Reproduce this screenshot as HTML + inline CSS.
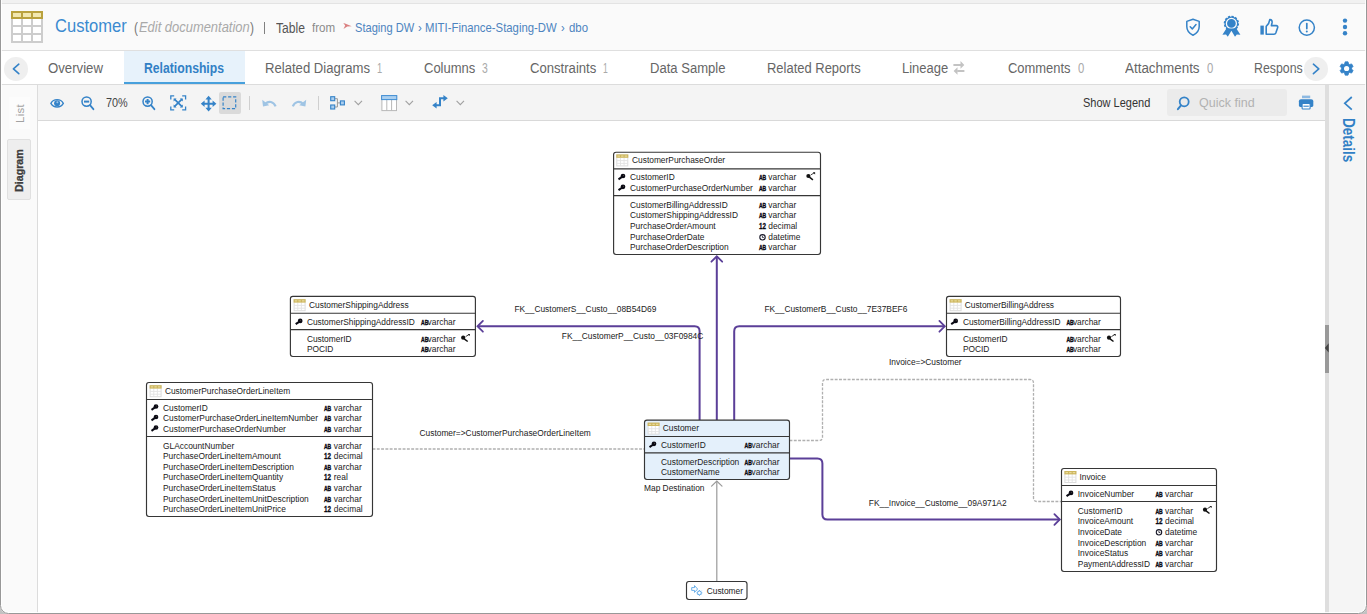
<!DOCTYPE html>
<html lang="en">
<head>
<meta charset="utf-8">
<title>Customer - Relationships</title>
<style>
html,body{margin:0;padding:0;}
body{width:1367px;height:614px;overflow:hidden;position:relative;background:#fff;font-family:"Liberation Sans",Arial,sans-serif;}
.abs{position:absolute;}
.t{position:absolute;white-space:nowrap;line-height:1em;transform-origin:0 50%;display:inline-block;}
#topstrip{left:0;top:0;width:1367px;height:3px;background:#f1f1f1;}
#topline{left:0;top:3px;width:1367px;height:1px;background:#e3e3e3;}
#header{left:0;top:4px;width:1367px;height:46px;background:#fafafa;border-bottom:1px solid #dfdfdf;}
#tabs{left:0;top:51px;width:1367px;height:33px;background:#fff;border-bottom:1px solid #dcdcdc;}
#tabactive{left:124px;top:51px;width:120.5px;height:33px;background:#e7f2fb;border-bottom:2.2px solid #47a0dc;box-sizing:border-box;}
#toolbar{left:38px;top:85px;width:1287px;height:35px;background:#f4f4f4;border-bottom:1px solid #d9d9d9;}
#leftbar{left:0;top:85px;width:37px;height:529px;background:#fafafa;border-right:1px solid #dcdcdc;}
#canvas{left:38px;top:121px;width:1287px;height:493px;background:#fff;}
#splitter{left:1325px;top:85px;width:3.8px;height:529px;background:#dedede;}
#handle{left:1325px;top:325px;width:3.8px;height:48px;background:#999;}
#details{left:1328.6px;top:85px;width:38.4px;height:529px;background:#f5f5f5;}
#frame{left:0;top:-4px;width:1367px;height:618px;border:1.3px solid #989898;border-radius:0 0 8.5px 8.5px;pointer-events:none;box-sizing:border-box;box-shadow:inset 0 0 0 1px rgba(255,255,255,0.85),0 0 0 6px #c2c2c2;}
.circ{width:23.5px;height:23.5px;border-radius:50%;background:#efefef;}
#qf{left:1167px;top:89px;width:120px;height:27px;background:#ebebeb;border-radius:3px;}
#selbox{left:219px;top:92px;width:22px;height:22px;background:#dadada;border-radius:2px;}
.sep{width:1px;height:14px;top:96px;background:#cfcfcf;}
#diagtab{left:7px;top:139px;width:23.5px;height:60.5px;background:#eeeeee;border:1px solid #e0e0e0;box-sizing:border-box;border-radius:2px;}
.vt{position:absolute;white-space:nowrap;line-height:1em;transform-origin:0 0;}
svg{overflow:visible}
</style>
</head>
<body>
<div id="topstrip" class="abs"></div><div id="topline" class="abs"></div>
<div id="header" class="abs"></div>
<div id="tabs" class="abs"></div>
<div id="tabactive" class="abs"></div>
<div id="toolbar" class="abs"></div>
<div id="leftbar" class="abs"></div>
<div id="canvas" class="abs"></div>
<div id="splitter" class="abs"></div>
<div id="handle" class="abs"></div>
<div id="details" class="abs"></div>
<div class="abs circ" style="left:4.3px;top:57px"></div>
<div class="abs circ" style="left:1304.2px;top:57px"></div>
<div id="qf" class="abs"></div>
<div id="selbox" class="abs"></div>
<div class="abs sep" style="left:249px"></div>
<div class="abs sep" style="left:318px"></div>
<div id="diagtab" class="abs"></div>
<div class="abs" style="left:264px;top:22px;width:1px;height:11.5px;background:#808080"></div>
<svg class="abs" style="left:11px;top:11px" width="32" height="32" viewBox="0 0 32 32"><rect x="0" y="0" width="32" height="32" fill="#cdcdcd"/><rect x="2" y="8" width="8" height="6" fill="#fff"/><rect x="12" y="8" width="8" height="6" fill="#fff"/><rect x="22" y="8" width="8" height="6" fill="#fff"/><rect x="2" y="16" width="8" height="6" fill="#fff"/><rect x="12" y="16" width="8" height="6" fill="#fff"/><rect x="22" y="16" width="8" height="6" fill="#fff"/><rect x="2" y="24" width="8" height="6" fill="#fff"/><rect x="12" y="24" width="8" height="6" fill="#fff"/><rect x="22" y="24" width="8" height="6" fill="#fff"/><rect x="0" y="0" width="32" height="8" fill="#b9a13d"/><rect x="2" y="2" width="8" height="4" fill="#f2e7ae"/><rect x="12" y="2" width="8" height="4" fill="#f2e7ae"/><rect x="22" y="2" width="8" height="4" fill="#f2e7ae"/></svg>
<svg class="abs" style="left:10px;top:61px" width="12" height="16" viewBox="0 0 12 16"><path d="M8.8 3.2L3.4 7.9L8.8 12.6" fill="none" stroke="#3583c8" stroke-width="1.6" stroke-linecap="round" stroke-linejoin="round"/></svg>
<svg class="abs" style="left:1310px;top:61px" width="12" height="16" viewBox="0 0 12 16"><path d="M3.4 3.2L8.8 7.9L3.4 12.6" fill="none" stroke="#3583c8" stroke-width="1.6" stroke-linecap="round" stroke-linejoin="round"/></svg>
<svg class="abs" style="left:343px;top:22px" width="10" height="8" viewBox="0 0 10 8"><path d="M0.3 1L2 1.4L8.7 4.2L4.2 4.5L0.5 6.9L2.2 3.5Z" fill="#d4686a" opacity="0.85"/></svg>
<svg class="abs" style="left:1185px;top:17.6px" width="16" height="18.4" viewBox="0 0 16 18.4"><path d="M8 1.2L14.2 3.4V8.6C14.2 12.6 11.6 15.6 8 17.2C4.4 15.6 1.8 12.6 1.8 8.6V3.4Z" fill="none" stroke="#3583c8" stroke-width="1.5" stroke-linejoin="round"/><path d="M5.2 8.8L7.3 10.9L11 6.6" fill="none" stroke="#3583c8" stroke-width="1.5" stroke-linecap="round" stroke-linejoin="round"/></svg>
<svg class="abs" style="left:1222px;top:16.4px" width="19" height="21" viewBox="0 0 19 21"><circle cx="9.4" cy="7.4" r="6.9" fill="#3583c8" stroke="#3583c8" stroke-width="1.6" stroke-dasharray="2.2 1.4"/><circle cx="9.4" cy="7.4" r="5" fill="none" stroke="#fafafa" stroke-width="1.3"/><path d="M4.4 12.4L0.4 18.8L4 18.4L5.8 20.8L9.4 14.8L13 20.8L14.8 18.4L18.4 18.8L14.4 12.4Z" fill="#3583c8"/></svg>
<svg class="abs" style="left:1259.5px;top:17.6px" width="19" height="18" viewBox="0 0 19 18"><rect x="0.4" y="7.6" width="3.4" height="9" fill="#3583c8"/><path d="M6.2 8.4C8.2 6.8 9.4 4.6 9.8 1.6C11.6 1.4 12.4 3 12 5L11.4 7.6H16.2C17.4 7.6 18 8.6 17.6 9.8L15.8 15C15.5 15.8 14.9 16.2 14 16.2H6.2Z" fill="none" stroke="#3583c8" stroke-width="1.6" stroke-linejoin="round"/></svg>
<svg class="abs" style="left:1298px;top:18.8px" width="18" height="18" viewBox="0 0 18 18"><circle cx="8.8" cy="8.6" r="7.6" fill="none" stroke="#3583c8" stroke-width="1.5"/><path d="M8.8 4.6V9.6" stroke="#3583c8" stroke-width="1.7" stroke-linecap="round"/><circle cx="8.8" cy="12.4" r="1" fill="#3583c8"/></svg>
<svg class="abs" style="left:1341px;top:17px" width="8" height="20" viewBox="0 0 8 20"><circle cx="4" cy="3.6" r="2.2" fill="#3583c8"/><circle cx="4" cy="10" r="2.2" fill="#3583c8"/><circle cx="4" cy="16.3" r="2.2" fill="#3583c8"/></svg>
<svg class="abs" style="left:952.5px;top:61px" width="12" height="14" viewBox="0 0 12 14"><path d="M0.4 3.9H8M4.2 10H11.4" fill="none" stroke="#c3c3c3" stroke-width="2"/><path d="M7.5 0.1L11.3 3.9L7.5 7.7ZM4.5 6.2L0.6 10L4.5 13.8Z" fill="#c3c3c3"/></svg>
<svg class="abs" style="left:1340.4px;top:61.7px" width="14" height="14" viewBox="0 0 14 14"><path d="M8.02 13.15 L5.18 13.15 L4.56 11.07 L3.67 10.55 L1.55 11.05 L0.13 8.60 L1.63 7.02 L1.63 5.98 L0.13 4.40 L1.55 1.95 L3.67 2.45 L4.56 1.93 L5.18 -0.15 L8.02 -0.15 L8.64 1.93 L9.53 2.45 L11.65 1.95 L13.07 4.40 L11.57 5.98 L11.57 7.02 L13.07 8.60 L11.65 11.05 L9.53 10.55 L8.64 11.07Z" fill="#3583c8" stroke="#3583c8" stroke-width="0.8" stroke-linejoin="round"/><circle cx="6.6" cy="6.5" r="2.6" fill="#fff"/></svg>
<svg class="abs" style="left:50px;top:97.6px" width="15" height="11" viewBox="0 0 15 11"><path d="M0.9 5.3C3.6 0.4 10.6 0.4 13.3 5.3C10.6 10.2 3.6 10.2 0.9 5.3Z" fill="none" stroke="#3583c8" stroke-width="1.4"/><circle cx="7.1" cy="5.2" r="3" fill="#3583c8"/><circle cx="7.4" cy="4.2" r="1" fill="#9cc4e8"/></svg>
<svg class="abs" style="left:81px;top:96px" width="14" height="15" viewBox="0 0 14 15"><circle cx="5.6" cy="5.6" r="4.6" fill="none" stroke="#3583c8" stroke-width="1.5"/><path d="M9 9.2L12.4 13.2" stroke="#3583c8" stroke-width="1.8" stroke-linecap="round"/><path d="M3 5.6H8.2" stroke="#3583c8" stroke-width="2"/></svg>
<svg class="abs" style="left:141.8px;top:96px" width="14" height="15" viewBox="0 0 14 15"><circle cx="5.6" cy="5.6" r="4.6" fill="none" stroke="#3583c8" stroke-width="1.5"/><path d="M9 9.2L12.4 13.2" stroke="#3583c8" stroke-width="1.8" stroke-linecap="round"/><path d="M3 5.6H8.2M5.6 3V8.2" stroke="#3583c8" stroke-width="2"/></svg>
<svg class="abs" style="left:170px;top:95px" width="17" height="16" viewBox="0 0 17 16"><path d="M0.8 4.4V0.9H4.2M12.2 0.9H15.6V4.4M15.6 11.4V14.9H12.2M4.2 14.9H0.8V11.4" fill="none" stroke="#3583c8" stroke-width="1.3"/><path d="M4.4 4.2L12 11.6M12 4.2L4.4 11.6" stroke="#3583c8" stroke-width="1.7"/><path d="M3.6 3.4H6.6L3.6 6.4ZM12.8 3.4H9.8L12.8 6.4ZM3.6 12.4H6.6L3.6 9.4ZM12.8 12.4H9.8L12.8 9.4Z" fill="#3583c8"/></svg>
<svg class="abs" style="left:200.6px;top:95.6px" width="16" height="16" viewBox="0 0 16 16"><path d="M7.6 2V13.4M1.8 7.7H13.4" stroke="#3583c8" stroke-width="2"/><path d="M7.6 -0.2L10.8 3.6H4.4ZM7.6 15.6L10.8 11.8H4.4ZM-0.2 7.7L3.6 4.5V10.9ZM15.4 7.7L11.6 4.5V10.9Z" fill="#3583c8"/></svg>
<svg class="abs" style="left:222px;top:96px" width="15" height="14" viewBox="0 0 15 14"><rect x="1.1" y="0.9" width="12.6" height="11.8" fill="none" stroke="#3583c8" stroke-width="1.2" stroke-dasharray="3.2 1.8"/></svg>
<svg class="abs" style="left:261.5px;top:99px" width="15" height="9" viewBox="0 0 15 9"><path d="M3.4 4.8C6.6 1.6 11.6 2.4 13.6 7.4" fill="none" stroke="#9fc4e4" stroke-width="2.2"/><path d="M0.2 0.8L1 7.6L7.2 6.2Z" fill="#9fc4e4"/></svg>
<svg class="abs" style="left:291.5px;top:99px" width="15" height="9" viewBox="0 0 15 9"><path d="M11 4.8C7.8 1.6 2.8 2.4 0.8 7.4" fill="none" stroke="#9fc4e4" stroke-width="2.2"/><path d="M14.2 0.8L13.4 7.6L7.2 6.2Z" fill="#9fc4e4"/></svg>
<svg class="abs" style="left:330px;top:95.6px" width="16" height="15" viewBox="0 0 16 15"><path d="M5 2.7H7.4V11H5M7.4 6.9H10.4" fill="none" stroke="#9a9a9a" stroke-width="1"/><rect x="0.7" y="0.7" width="4" height="4" fill="#a9cdee" stroke="#3583c8" stroke-width="1.1"/><rect x="0.7" y="9" width="4" height="4" fill="#a9cdee" stroke="#3583c8" stroke-width="1.1"/><rect x="10.4" y="4.9" width="4" height="4" fill="#a9cdee" stroke="#3583c8" stroke-width="1.1"/></svg>
<svg class="abs" style="left:354px;top:100.4px" width="9" height="6" viewBox="0 0 9 6"><path d="M0.6 0.8L4.3 4.6L8 0.8" fill="none" stroke="#a0a0a0" stroke-width="1.1"/></svg>
<svg class="abs" style="left:404.6px;top:100.4px" width="9" height="6" viewBox="0 0 9 6"><path d="M0.6 0.8L4.3 4.6L8 0.8" fill="none" stroke="#a0a0a0" stroke-width="1.1"/></svg>
<svg class="abs" style="left:456px;top:100.4px" width="9" height="6" viewBox="0 0 9 6"><path d="M0.6 0.8L4.3 4.6L8 0.8" fill="none" stroke="#a0a0a0" stroke-width="1.1"/></svg>
<svg class="abs" style="left:380.8px;top:94.6px" width="17" height="17" viewBox="0 0 17 17"><rect x="0.9" y="0.8" width="14.6" height="14.8" fill="#fff" stroke="#b8b8b8" stroke-width="1"/><path d="M5.8 4V15.6M10.6 4V15.6" stroke="#b8b8b8" stroke-width="1"/><rect x="0.6" y="0.6" width="15.2" height="4" fill="#abd0f0" stroke="#3f8dd4" stroke-width="1"/></svg>
<svg class="abs" style="left:432px;top:95.2px" width="17" height="14" viewBox="0 0 17 14"><path d="M3.4 10.2H8V3.2H12.4" fill="none" stroke="#3583c8" stroke-width="2"/><path d="M0.2 10.2L4.6 7V13.4ZM15.8 3.2L11.4 0V6.4Z" fill="#3583c8"/></svg>
<svg class="abs" style="left:1176.4px;top:95.6px" width="14" height="15" viewBox="0 0 14 15"><circle cx="8.2" cy="5.8" r="4.5" fill="none" stroke="#3583c8" stroke-width="1.8"/><path d="M5 9.4L1.9 13.2" stroke="#3583c8" stroke-width="2" stroke-linecap="round"/></svg>
<svg class="abs" style="left:1299px;top:94.6px" width="15" height="15" viewBox="0 0 15 15"><rect x="3" y="0.6" width="8.2" height="2.6" fill="#8db9e2"/><path d="M2 4.2H12.2C13.4 4.2 14.3 5.1 14.3 6.3V10.6C14.3 11.4 13.7 12 12.9 12H1.3C0.5 12 -0.1 11.4 -0.1 10.6V6.3C-0.1 5.1 0.8 4.2 2 4.2Z" fill="#3583c8"/><rect x="3.1" y="8.4" width="8" height="5.6" rx="0.8" fill="#fff" stroke="#3583c8" stroke-width="1.1"/><path d="M4.4 11.2H9.8" stroke="#3583c8" stroke-width="1.1"/></svg>
<svg class="abs" style="left:1343px;top:95.6px" width="12" height="15" viewBox="0 0 12 15"><path d="M8.8 1L1.8 7.3L8.8 13.6" fill="none" stroke="#3583c8" stroke-width="1.7" stroke-linejoin="miter"/></svg>
<svg class="abs" style="left:1324.2px;top:343.4px" width="6" height="10" viewBox="0 0 6 10"><path d="M4.7 0.2V9.6L0.8 4.9Z" fill="#454545"/></svg>
<span class="t" style="left:55.3px;top:17.02px;font-size:18.4px;color:#3b8ad0;transform:scaleX(0.8994)">Customer</span>
<span class="t" style="left:134.2px;top:19.90px;font-size:15px;color:#777;transform:scaleX(0.8000)">(</span>
<span class="t" style="left:138.6px;top:20.24px;font-size:14.6px;color:#a9a9a9;transform:scaleX(0.8859);font-style:italic">Edit documentation</span>
<span class="t" style="left:250px;top:19.90px;font-size:15px;color:#777;transform:scaleX(0.8000)">)</span>
<span class="t" style="left:275.5px;top:20.75px;font-size:14px;color:#555;transform:scaleX(0.8665)">Table</span>
<span class="t" style="left:311.8px;top:22.10px;font-size:12.4px;color:#8a8a8a;transform:scaleX(0.9356)">from</span>
<span class="t" style="left:354.5px;top:22.10px;font-size:12.4px;color:#4d84bf;transform:scaleX(0.8968)">Staging DW</span>
<span class="t" style="left:417.6px;top:21.70px;font-size:12.4px;color:#4d84bf;transform:scaleX(0.9177)">›</span>
<span class="t" style="left:425.3px;top:22.10px;font-size:12.4px;color:#4d84bf;transform:scaleX(0.9152)">MITI-Finance-Staging-DW</span>
<span class="t" style="left:560.9px;top:21.70px;font-size:12.4px;color:#4d84bf;transform:scaleX(0.8936)">›</span>
<span class="t" style="left:568.5px;top:22.10px;font-size:12.4px;color:#4d84bf;transform:scaleX(0.9184)">dbo</span>
<span class="t" style="left:48.3px;top:60.75px;font-size:14px;color:#666;transform:scaleX(0.9424)">Overview</span>
<span class="t" style="left:144.3px;top:60.75px;font-size:14px;color:#3180c5;transform:scaleX(0.8715);font-weight:bold">Relationships</span>
<span class="t" style="left:265px;top:60.75px;font-size:14px;color:#666;transform:scaleX(0.9370)">Related Diagrams</span>
<span class="t" style="left:377.2px;top:60.75px;font-size:14px;color:#aaa;transform:scaleX(0.6669)">1</span>
<span class="t" style="left:424px;top:60.75px;font-size:14px;color:#666;transform:scaleX(0.9285)">Columns</span>
<span class="t" style="left:482px;top:60.75px;font-size:14px;color:#aaa;transform:scaleX(0.7439)">3</span>
<span class="t" style="left:529.5px;top:60.75px;font-size:14px;color:#666;transform:scaleX(0.9363)">Constraints</span>
<span class="t" style="left:602.7px;top:60.75px;font-size:14px;color:#aaa;transform:scaleX(0.6156)">1</span>
<span class="t" style="left:650.3px;top:60.75px;font-size:14px;color:#666;transform:scaleX(0.9328)">Data Sample</span>
<span class="t" style="left:767.3px;top:60.75px;font-size:14px;color:#666;transform:scaleX(0.9261)">Related Reports</span>
<span class="t" style="left:902.3px;top:60.75px;font-size:14px;color:#666;transform:scaleX(0.9272)">Lineage</span>
<span class="t" style="left:1008.3px;top:60.75px;font-size:14px;color:#666;transform:scaleX(0.9248)">Comments</span>
<span class="t" style="left:1077.6px;top:60.75px;font-size:14px;color:#aaa;transform:scaleX(0.8080)">0</span>
<span class="t" style="left:1125.3px;top:60.75px;font-size:14px;color:#666;transform:scaleX(0.9585)">Attachments</span>
<span class="t" style="left:1206.8px;top:60.75px;font-size:14px;color:#aaa;transform:scaleX(0.8080)">0</span>
<span class="t" style="left:1254.2px;top:60.75px;font-size:14px;color:#666;transform:scaleX(0.8812)">Respons</span>
<span class="t" style="left:106.3px;top:96.50px;font-size:12.4px;color:#444;transform:scaleX(0.8746)">70%</span>
<span class="t" style="left:1082.9px;top:97.10px;font-size:12.4px;color:#333;transform:scaleX(0.8879)">Show Legend</span>
<span class="t" style="left:1199.4px;top:97.10px;font-size:12.4px;color:#b2b2b2;transform:scaleX(1.0092)">Quick find</span>
<div class="abs" style="left:9px;top:97px;width:21px;height:32px;background:#fcfcfc"></div>
<span class="vt" style="left:14.6px;top:122.6px;font-size:11.4px;color:#a2a2a2;letter-spacing:0.3px;transform:rotate(-90deg)">List</span>
<span class="vt" style="left:14.3px;top:191.6px;font-size:10.7px;color:#3d3d3d;font-weight:bold;letter-spacing:0px;-webkit-text-stroke:0.3px #3d3d3d;transform:rotate(-90deg)">Diagram</span>
<span class="vt" style="left:1356px;top:117.8px;font-size:16px;color:#3180c5;font-weight:bold;transform:rotate(90deg) scaleX(0.845)">Details</span>
<svg id="dg" width="1367" height="614" viewBox="0 0 1367 614" style="position:absolute;left:0;top:0" font-family="'Liberation Sans', Arial, sans-serif" font-size="8.4">
<path d="M372.5 449H644.5" fill="none" stroke="#b0b0b0" stroke-width="1.3" stroke-dasharray="2.9 1.4"/>
<path d="M789.5 440.5H818.9Q822.5 440.5 822.5 436.9V383.1Q822.5 379.5 826.1 379.5H1029.9Q1033.5 379.5 1033.5 383.1V497.9Q1033.5 501.5 1037.1 501.5H1061.5" fill="none" stroke="#b0b0b0" stroke-width="1.3" stroke-dasharray="2.9 1.4"/>
<path d="M716.8 581V481" fill="none" stroke="#9a9a9a" stroke-width="1.2"/>
<path d="M711.5999999999999 486.2L716.8 481L722.0 486.2" fill="none" stroke="#9a9a9a" stroke-width="1.2" stroke-linecap="round" stroke-linejoin="miter"/>
<path d="M716.8 420.5V256.5" fill="none" stroke="#5b3f98" stroke-width="2"/>
<path d="M711.4 261.7L716.8 256.3L722.1999999999999 261.7" fill="none" stroke="#5b3f98" stroke-width="1.8" stroke-linecap="round" stroke-linejoin="miter"/>
<path d="M699.6 420.5V331.3Q699.6 326.3 694.6 326.3H478" fill="none" stroke="#5b3f98" stroke-width="2"/>
<path d="M482.9 320.90000000000003L477.5 326.3L482.9 331.7" fill="none" stroke="#5b3f98" stroke-width="1.8" stroke-linecap="round" stroke-linejoin="miter"/>
<path d="M734.2 420.5V331.3Q734.2 326.3 739.2 326.3H944.5" fill="none" stroke="#5b3f98" stroke-width="2"/>
<path d="M939.4 320.90000000000003L944.8 326.3L939.4 331.7" fill="none" stroke="#5b3f98" stroke-width="1.8" stroke-linecap="round" stroke-linejoin="miter"/>
<path d="M789.5 458.5H817.4Q822.4 458.5 822.4 463.5V514.5Q822.4 519.5 827.4 519.5H1059.5" fill="none" stroke="#5b3f98" stroke-width="2"/>
<path d="M1054.3999999999999 514.1L1059.8 519.5L1054.3999999999999 524.9" fill="none" stroke="#5b3f98" stroke-width="1.8" stroke-linecap="round" stroke-linejoin="miter"/>
<text x="514.4" y="312" fill="#222">FK__CustomerS__Custo__08B54D69</text>
<text x="561.8" y="339" fill="#222">FK__CustomerP__Custo__03F0984C</text>
<text x="764.4" y="312" fill="#222">FK__CustomerB__Custo__7E37BEF6</text>
<text x="889" y="365" fill="#222">Invoice=&gt;Customer</text>
<text x="419.5" y="436" fill="#222">Customer=&gt;CustomerPurchaseOrderLineItem</text>
<text x="868.8" y="506" fill="#222">FK__Invoice__Custome__09A971A2</text>
<text x="644" y="491" fill="#222">Map Destination</text>
<rect x="613.6" y="152.2" width="206.89999999999998" height="102.30000000000001" rx="2.4" fill="#fff" stroke="#363636" stroke-width="1.15"/>
<path d="M613.6 168.8H820.5" stroke="#363636" stroke-width="1.15"/>
<path d="M613.6 195.6H820.5" stroke="#363636" stroke-width="1.15"/>
<g transform="translate(616.3,154.4)"><rect x="0.5" y="0.5" width="11" height="11" fill="#fff" stroke="#dcdcdc" stroke-width="1"/><path d="M0.5 6.2H11.5M0.5 9H11.5M4.2 3V11.5M7.8 3V11.5" stroke="#e2e2e2" stroke-width="0.9" fill="none"/><rect x="0" y="0" width="12" height="3.4" fill="#cdb65e"/><path d="M1.2 1.7H3.6M4.8 1.7H7.2M8.4 1.7H10.8" stroke="#efe3a8" stroke-width="1" fill="none"/></g>
<text x="632" y="163" fill="#222">CustomerPurchaseOrder</text>
<g transform="translate(617.9,173.7)"><circle cx="5.1" cy="2.3" r="2.35" fill="#0a0a14"/><path d="M4.4 3.0L0.6 5.6" stroke="#0a0a14" stroke-width="2" stroke-linecap="butt"/><circle cx="5.6" cy="1.8" r="0.45" fill="#876"/></g>
<text x="630" y="180" fill="#222">CustomerID</text>
<text transform="translate(758.9000000000001,179.8) scale(0.64,1)" font-size="7.9" font-weight="bold" fill="#0a0a14" stroke="#0a0a14" stroke-width="0.45">AB</text>
<text x="768.3" y="180" fill="#222">varchar</text>
<g transform="translate(806,172.1)"><circle cx="2.4" cy="3.9" r="2.1" fill="#111"/><path d="M3.4 5.0L6.9 7.7" stroke="#111" stroke-width="1.5"/><path d="M4.8 2.8L8.2 0.8" stroke="#111" stroke-width="0.8"/><path d="M6.8 0.1H9.1V2.3Z" fill="#111"/></g>
<g transform="translate(617.9,184.5)"><circle cx="5.1" cy="2.3" r="2.35" fill="#0a0a14"/><path d="M4.4 3.0L0.6 5.6" stroke="#0a0a14" stroke-width="2" stroke-linecap="butt"/><circle cx="5.6" cy="1.8" r="0.45" fill="#876"/></g>
<text x="630" y="191" fill="#222">CustomerPurchaseOrderNumber</text>
<text transform="translate(758.9000000000001,190.8) scale(0.64,1)" font-size="7.9" font-weight="bold" fill="#0a0a14" stroke="#0a0a14" stroke-width="0.45">AB</text>
<text x="768.3" y="191" fill="#222">varchar</text>
<text x="630" y="208" fill="#222">CustomerBillingAddressID</text>
<text transform="translate(758.9000000000001,207.8) scale(0.64,1)" font-size="7.9" font-weight="bold" fill="#0a0a14" stroke="#0a0a14" stroke-width="0.45">AB</text>
<text x="768.3" y="208" fill="#222">varchar</text>
<text x="630" y="218" fill="#222">CustomerShippingAddressID</text>
<text transform="translate(758.9000000000001,217.8) scale(0.64,1)" font-size="7.9" font-weight="bold" fill="#0a0a14" stroke="#0a0a14" stroke-width="0.45">AB</text>
<text x="768.3" y="218" fill="#222">varchar</text>
<text x="630" y="229" fill="#222">PurchaseOrderAmount</text>
<text transform="translate(759.0,229) scale(0.76,1)" font-size="8.3" font-weight="bold" fill="#0a0a14" stroke="#0a0a14" stroke-width="0.3">12</text>
<text x="768.3" y="229" fill="#222">decimal</text>
<text x="630" y="240" fill="#222">PurchaseOrderDate</text>
<g transform="translate(759.2,234.4)"><circle cx="3.3" cy="2.9" r="2.7" fill="#fff" stroke="#181828" stroke-width="1.1"/><path d="M3.2 1.3V3.1H4.6" stroke="#181828" stroke-width="0.8" fill="none"/></g>
<text x="768.3" y="240" fill="#222">datetime</text>
<text x="630" y="250" fill="#222">PurchaseOrderDescription</text>
<text transform="translate(758.9000000000001,249.8) scale(0.64,1)" font-size="7.9" font-weight="bold" fill="#0a0a14" stroke="#0a0a14" stroke-width="0.45">AB</text>
<text x="768.3" y="250" fill="#222">varchar</text>
<rect x="290.4" y="296.3" width="185.0" height="60.19999999999999" rx="2.4" fill="#fff" stroke="#363636" stroke-width="1.15"/>
<path d="M290.4 313.2H475.4" stroke="#363636" stroke-width="1.15"/>
<path d="M290.4 329.6H475.4" stroke="#363636" stroke-width="1.15"/>
<g transform="translate(293.6,299.2)"><rect x="0.5" y="0.5" width="11" height="11" fill="#fff" stroke="#dcdcdc" stroke-width="1"/><path d="M0.5 6.2H11.5M0.5 9H11.5M4.2 3V11.5M7.8 3V11.5" stroke="#e2e2e2" stroke-width="0.9" fill="none"/><rect x="0" y="0" width="12" height="3.4" fill="#cdb65e"/><path d="M1.2 1.7H3.6M4.8 1.7H7.2M8.4 1.7H10.8" stroke="#efe3a8" stroke-width="1" fill="none"/></g>
<text x="309" y="308" fill="#222">CustomerShippingAddress</text>
<g transform="translate(295.1,318.59999999999997)"><circle cx="5.1" cy="2.3" r="2.35" fill="#0a0a14"/><path d="M4.4 3.0L0.6 5.6" stroke="#0a0a14" stroke-width="2" stroke-linecap="butt"/><circle cx="5.6" cy="1.8" r="0.45" fill="#876"/></g>
<text x="306.9" y="325" fill="#222">CustomerShippingAddressID</text>
<text transform="translate(421.0,324.8) scale(0.64,1)" font-size="7.9" font-weight="bold" fill="#0a0a14" stroke="#0a0a14" stroke-width="0.45">AB</text>
<text x="427.6" y="325" fill="#222">varchar</text>
<text x="306.9" y="342" fill="#222">CustomerID</text>
<text transform="translate(421.0,341.8) scale(0.64,1)" font-size="7.9" font-weight="bold" fill="#0a0a14" stroke="#0a0a14" stroke-width="0.45">AB</text>
<text x="427.6" y="342" fill="#222">varchar</text>
<g transform="translate(460.8,333.8)"><circle cx="2.4" cy="3.9" r="2.1" fill="#111"/><path d="M3.4 5.0L6.9 7.7" stroke="#111" stroke-width="1.5"/><path d="M4.8 2.8L8.2 0.8" stroke="#111" stroke-width="0.8"/><path d="M6.8 0.1H9.1V2.3Z" fill="#111"/></g>
<text x="306.9" y="352" fill="#222">POCID</text>
<text transform="translate(421.0,351.8) scale(0.64,1)" font-size="7.9" font-weight="bold" fill="#0a0a14" stroke="#0a0a14" stroke-width="0.45">AB</text>
<text x="427.6" y="352" fill="#222">varchar</text>
<rect x="946.5" y="296.3" width="174.0" height="60.19999999999999" rx="2.4" fill="#fff" stroke="#363636" stroke-width="1.15"/>
<path d="M946.5 313.2H1120.5" stroke="#363636" stroke-width="1.15"/>
<path d="M946.5 329.6H1120.5" stroke="#363636" stroke-width="1.15"/>
<g transform="translate(949.6,299.2)"><rect x="0.5" y="0.5" width="11" height="11" fill="#fff" stroke="#dcdcdc" stroke-width="1"/><path d="M0.5 6.2H11.5M0.5 9H11.5M4.2 3V11.5M7.8 3V11.5" stroke="#e2e2e2" stroke-width="0.9" fill="none"/><rect x="0" y="0" width="12" height="3.4" fill="#cdb65e"/><path d="M1.2 1.7H3.6M4.8 1.7H7.2M8.4 1.7H10.8" stroke="#efe3a8" stroke-width="1" fill="none"/></g>
<text x="964.7" y="308" fill="#222">CustomerBillingAddress</text>
<g transform="translate(950.6,318.59999999999997)"><circle cx="5.1" cy="2.3" r="2.35" fill="#0a0a14"/><path d="M4.4 3.0L0.6 5.6" stroke="#0a0a14" stroke-width="2" stroke-linecap="butt"/><circle cx="5.6" cy="1.8" r="0.45" fill="#876"/></g>
<text x="962.9" y="325" fill="#222">CustomerBillingAddressID</text>
<text transform="translate(1066.4,324.8) scale(0.64,1)" font-size="7.9" font-weight="bold" fill="#0a0a14" stroke="#0a0a14" stroke-width="0.45">AB</text>
<text x="1072.9" y="325" fill="#222">varchar</text>
<text x="962.9" y="342" fill="#222">CustomerID</text>
<text transform="translate(1066.4,341.8) scale(0.64,1)" font-size="7.9" font-weight="bold" fill="#0a0a14" stroke="#0a0a14" stroke-width="0.45">AB</text>
<text x="1072.9" y="342" fill="#222">varchar</text>
<g transform="translate(1106.6,333.8)"><circle cx="2.4" cy="3.9" r="2.1" fill="#111"/><path d="M3.4 5.0L6.9 7.7" stroke="#111" stroke-width="1.5"/><path d="M4.8 2.8L8.2 0.8" stroke="#111" stroke-width="0.8"/><path d="M6.8 0.1H9.1V2.3Z" fill="#111"/></g>
<text x="962.9" y="352" fill="#222">POCID</text>
<text transform="translate(1066.4,351.8) scale(0.64,1)" font-size="7.9" font-weight="bold" fill="#0a0a14" stroke="#0a0a14" stroke-width="0.45">AB</text>
<text x="1072.9" y="352" fill="#222">varchar</text>
<rect x="146.5" y="382.5" width="226.0" height="134.0" rx="2.4" fill="#fff" stroke="#363636" stroke-width="1.15"/>
<path d="M146.5 399.5H372.5" stroke="#363636" stroke-width="1.15"/>
<path d="M146.5 436.5H372.5" stroke="#363636" stroke-width="1.15"/>
<g transform="translate(149.6,385.2)"><rect x="0.5" y="0.5" width="11" height="11" fill="#fff" stroke="#dcdcdc" stroke-width="1"/><path d="M0.5 6.2H11.5M0.5 9H11.5M4.2 3V11.5M7.8 3V11.5" stroke="#e2e2e2" stroke-width="0.9" fill="none"/><rect x="0" y="0" width="12" height="3.4" fill="#cdb65e"/><path d="M1.2 1.7H3.6M4.8 1.7H7.2M8.4 1.7H10.8" stroke="#efe3a8" stroke-width="1" fill="none"/></g>
<text x="164.9" y="394" fill="#222">CustomerPurchaseOrderLineItem</text>
<g transform="translate(150.9,404.2)"><circle cx="5.1" cy="2.3" r="2.35" fill="#0a0a14"/><path d="M4.4 3.0L0.6 5.6" stroke="#0a0a14" stroke-width="2" stroke-linecap="butt"/><circle cx="5.6" cy="1.8" r="0.45" fill="#876"/></g>
<text x="163" y="411" fill="#222">CustomerID</text>
<text transform="translate(323.9,410.8) scale(0.64,1)" font-size="7.9" font-weight="bold" fill="#0a0a14" stroke="#0a0a14" stroke-width="0.45">AB</text>
<text x="333.8" y="411" fill="#222">varchar</text>
<g transform="translate(150.9,414.7)"><circle cx="5.1" cy="2.3" r="2.35" fill="#0a0a14"/><path d="M4.4 3.0L0.6 5.6" stroke="#0a0a14" stroke-width="2" stroke-linecap="butt"/><circle cx="5.6" cy="1.8" r="0.45" fill="#876"/></g>
<text x="163" y="421" fill="#222">CustomerPurchaseOrderLineItemNumber</text>
<text transform="translate(323.9,420.8) scale(0.64,1)" font-size="7.9" font-weight="bold" fill="#0a0a14" stroke="#0a0a14" stroke-width="0.45">AB</text>
<text x="333.8" y="421" fill="#222">varchar</text>
<g transform="translate(150.9,425.2)"><circle cx="5.1" cy="2.3" r="2.35" fill="#0a0a14"/><path d="M4.4 3.0L0.6 5.6" stroke="#0a0a14" stroke-width="2" stroke-linecap="butt"/><circle cx="5.6" cy="1.8" r="0.45" fill="#876"/></g>
<text x="163" y="432" fill="#222">CustomerPurchaseOrderNumber</text>
<text transform="translate(323.9,431.8) scale(0.64,1)" font-size="7.9" font-weight="bold" fill="#0a0a14" stroke="#0a0a14" stroke-width="0.45">AB</text>
<text x="333.8" y="432" fill="#222">varchar</text>
<text x="163" y="449" fill="#222">GLAccountNumber</text>
<text transform="translate(323.9,448.8) scale(0.64,1)" font-size="7.9" font-weight="bold" fill="#0a0a14" stroke="#0a0a14" stroke-width="0.45">AB</text>
<text x="333.8" y="449" fill="#222">varchar</text>
<text x="163" y="459" fill="#222">PurchaseOrderLineItemAmount</text>
<text transform="translate(324.0,459) scale(0.76,1)" font-size="8.3" font-weight="bold" fill="#0a0a14" stroke="#0a0a14" stroke-width="0.3">12</text>
<text x="333.8" y="459" fill="#222">decimal</text>
<text x="163" y="470" fill="#222">PurchaseOrderLineItemDescription</text>
<text transform="translate(323.9,469.8) scale(0.64,1)" font-size="7.9" font-weight="bold" fill="#0a0a14" stroke="#0a0a14" stroke-width="0.45">AB</text>
<text x="333.8" y="470" fill="#222">varchar</text>
<text x="163" y="480" fill="#222">PurchaseOrderLineItemQuantity</text>
<text transform="translate(324.0,480) scale(0.76,1)" font-size="8.3" font-weight="bold" fill="#0a0a14" stroke="#0a0a14" stroke-width="0.3">12</text>
<text x="333.8" y="480" fill="#222">real</text>
<text x="163" y="491" fill="#222">PurchaseOrderLineItemStatus</text>
<text transform="translate(323.9,490.8) scale(0.64,1)" font-size="7.9" font-weight="bold" fill="#0a0a14" stroke="#0a0a14" stroke-width="0.45">AB</text>
<text x="333.8" y="491" fill="#222">varchar</text>
<text x="163" y="502" fill="#222">PurchaseOrderLineItemUnitDescription</text>
<text transform="translate(323.9,501.8) scale(0.64,1)" font-size="7.9" font-weight="bold" fill="#0a0a14" stroke="#0a0a14" stroke-width="0.45">AB</text>
<text x="333.8" y="502" fill="#222">varchar</text>
<text x="163" y="512" fill="#222">PurchaseOrderLineItemUnitPrice</text>
<text transform="translate(324.0,512) scale(0.76,1)" font-size="8.3" font-weight="bold" fill="#0a0a14" stroke="#0a0a14" stroke-width="0.3">12</text>
<text x="333.8" y="512" fill="#222">decimal</text>
<rect x="644.5" y="420.1" width="145.0" height="59.39999999999998" rx="2.4" fill="#e4f0fb" stroke="#363636" stroke-width="1.15"/>
<path d="M644.5 436.5H789.5" stroke="#363636" stroke-width="1.15"/>
<path d="M644.5 452.8H789.5" stroke="#363636" stroke-width="1.15"/>
<g transform="translate(647.6,422.6)"><rect x="0.5" y="0.5" width="11" height="11" fill="#fff" stroke="#dcdcdc" stroke-width="1"/><path d="M0.5 6.2H11.5M0.5 9H11.5M4.2 3V11.5M7.8 3V11.5" stroke="#e2e2e2" stroke-width="0.9" fill="none"/><rect x="0" y="0" width="12" height="3.4" fill="#cdb65e"/><path d="M1.2 1.7H3.6M4.8 1.7H7.2M8.4 1.7H10.8" stroke="#efe3a8" stroke-width="1" fill="none"/></g>
<text x="662.7" y="431" fill="#222">Customer</text>
<g transform="translate(648.9,441.5)"><circle cx="5.1" cy="2.3" r="2.35" fill="#0a0a14"/><path d="M4.4 3.0L0.6 5.6" stroke="#0a0a14" stroke-width="2" stroke-linecap="butt"/><circle cx="5.6" cy="1.8" r="0.45" fill="#876"/></g>
<text x="661" y="448" fill="#222">CustomerID</text>
<text transform="translate(744.5,447.8) scale(0.64,1)" font-size="7.9" font-weight="bold" fill="#0a0a14" stroke="#0a0a14" stroke-width="0.45">AB</text>
<text x="751.6" y="448" fill="#222">varchar</text>
<text x="661" y="465" fill="#222">CustomerDescription</text>
<text transform="translate(744.5,464.8) scale(0.64,1)" font-size="7.9" font-weight="bold" fill="#0a0a14" stroke="#0a0a14" stroke-width="0.45">AB</text>
<text x="751.6" y="465" fill="#222">varchar</text>
<text x="661" y="475" fill="#222">CustomerName</text>
<text transform="translate(744.5,474.8) scale(0.64,1)" font-size="7.9" font-weight="bold" fill="#0a0a14" stroke="#0a0a14" stroke-width="0.45">AB</text>
<text x="751.6" y="475" fill="#222">varchar</text>
<rect x="1061.5" y="468.5" width="155.0" height="103.0" rx="2.4" fill="#fff" stroke="#363636" stroke-width="1.15"/>
<path d="M1061.5 485.5H1216.5" stroke="#363636" stroke-width="1.15"/>
<path d="M1061.5 501.5H1216.5" stroke="#363636" stroke-width="1.15"/>
<g transform="translate(1064.4,471)"><rect x="0.5" y="0.5" width="11" height="11" fill="#fff" stroke="#dcdcdc" stroke-width="1"/><path d="M0.5 6.2H11.5M0.5 9H11.5M4.2 3V11.5M7.8 3V11.5" stroke="#e2e2e2" stroke-width="0.9" fill="none"/><rect x="0" y="0" width="12" height="3.4" fill="#cdb65e"/><path d="M1.2 1.7H3.6M4.8 1.7H7.2M8.4 1.7H10.8" stroke="#efe3a8" stroke-width="1" fill="none"/></g>
<text x="1079.4" y="480" fill="#222">Invoice</text>
<g transform="translate(1065.8999999999999,490.59999999999997)"><circle cx="5.1" cy="2.3" r="2.35" fill="#0a0a14"/><path d="M4.4 3.0L0.6 5.6" stroke="#0a0a14" stroke-width="2" stroke-linecap="butt"/><circle cx="5.6" cy="1.8" r="0.45" fill="#876"/></g>
<text x="1077.8" y="497" fill="#222">InvoiceNumber</text>
<text transform="translate(1155.4,496.8) scale(0.64,1)" font-size="7.9" font-weight="bold" fill="#0a0a14" stroke="#0a0a14" stroke-width="0.45">AB</text>
<text x="1165.1" y="497" fill="#222">varchar</text>
<text x="1077.8" y="514" fill="#222">CustomerID</text>
<text transform="translate(1155.4,513.8) scale(0.64,1)" font-size="7.9" font-weight="bold" fill="#0a0a14" stroke="#0a0a14" stroke-width="0.45">AB</text>
<text x="1165.1" y="514" fill="#222">varchar</text>
<g transform="translate(1202.6,505.8)"><circle cx="2.4" cy="3.9" r="2.1" fill="#111"/><path d="M3.4 5.0L6.9 7.7" stroke="#111" stroke-width="1.5"/><path d="M4.8 2.8L8.2 0.8" stroke="#111" stroke-width="0.8"/><path d="M6.8 0.1H9.1V2.3Z" fill="#111"/></g>
<text x="1077.8" y="524" fill="#222">InvoiceAmount</text>
<text transform="translate(1155.5,524) scale(0.76,1)" font-size="8.3" font-weight="bold" fill="#0a0a14" stroke="#0a0a14" stroke-width="0.3">12</text>
<text x="1165.1" y="524" fill="#222">decimal</text>
<text x="1077.8" y="535" fill="#222">InvoiceDate</text>
<g transform="translate(1155.7,529.4)"><circle cx="3.3" cy="2.9" r="2.7" fill="#fff" stroke="#181828" stroke-width="1.1"/><path d="M3.2 1.3V3.1H4.6" stroke="#181828" stroke-width="0.8" fill="none"/></g>
<text x="1165.1" y="535" fill="#222">datetime</text>
<text x="1077.8" y="546" fill="#222">InvoiceDescription</text>
<text transform="translate(1155.4,545.8) scale(0.64,1)" font-size="7.9" font-weight="bold" fill="#0a0a14" stroke="#0a0a14" stroke-width="0.45">AB</text>
<text x="1165.1" y="546" fill="#222">varchar</text>
<text x="1077.8" y="556" fill="#222">InvoiceStatus</text>
<text transform="translate(1155.4,555.8) scale(0.64,1)" font-size="7.9" font-weight="bold" fill="#0a0a14" stroke="#0a0a14" stroke-width="0.45">AB</text>
<text x="1165.1" y="556" fill="#222">varchar</text>
<text x="1077.8" y="567" fill="#222">PaymentAddressID</text>
<text transform="translate(1155.4,566.8) scale(0.64,1)" font-size="7.9" font-weight="bold" fill="#0a0a14" stroke="#0a0a14" stroke-width="0.45">AB</text>
<text x="1165.1" y="567" fill="#222">varchar</text>
<rect x="686.5" y="581.5" width="60.5" height="18" rx="2.4" fill="#fff" stroke="#363636" stroke-width="1.15"/>
<g transform="translate(691.2,585.2)" fill="none" stroke="#5aa6e6" stroke-width="0.9"><path d="M0.5 2.4H3.3V0.4L6.4 3.8L3.3 7.2V5.2H0.5Z"/><circle cx="8.2" cy="7.7" r="1.9"/><path d="M8.2 4.8V5.8M8.2 9.6V10.6M5.3 7.7H6.3M10.1 7.7H11.1M6.1 5.6L6.8 6.3M9.6 9.1L10.3 9.8M6.1 9.8L6.8 9.1M9.6 6.3L10.3 5.6"/></g>
<text x="706.7" y="594" fill="#222">Customer</text>
</svg>
<div id="frame" class="abs"></div>
</body>
</html>
